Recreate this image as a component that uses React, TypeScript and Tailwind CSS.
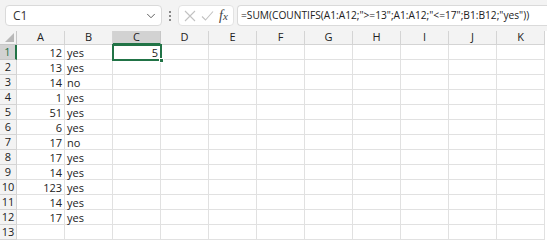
import { ChevronDown } from 'lucide-react';

const cols = ['A', 'B', 'C', 'D', 'E', 'F', 'G', 'H', 'I', 'J', 'K'];

const data: [number, string][] = [
    [12, 'yes'], [13, 'yes'], [14, 'no'], [1, 'yes'], [51, 'yes'], [6, 'yes'],
    [17, 'no'], [17, 'yes'], [14, 'yes'], [123, 'yes'], [14, 'yes'], [17, 'yes'],
];

const formula = '=SUM(COUNTIFS(A1:A12;">=13";A1:A12;"<=17";B1:B12;"yes"))';

export default function App() {
    const rows = Array.from({ length: 13 }, (_, i) => i + 1);

    return (
        <div className="w-[547px] h-[242px] overflow-hidden bg-white font-['Open_Sans',sans-serif] text-[11px] text-[#222]">
            {/* formula bar */}
            <div className="h-[31px] bg-[#f3f3f3] flex items-start pt-[5px] pl-[5px]">
                <div className="shrink-0 w-[157px] h-[21px] bg-white border border-[#dadada] rounded-[4px] flex items-center justify-between pl-[7px] pr-[3px]">
                    <span className="text-[12px] text-[#333]">C1</span>
                    <ChevronDown size={14} strokeWidth={1.6} className="text-[#555]" />
                </div>
                <div className="shrink-0 w-[16px] h-[21px] flex flex-col items-center justify-center gap-[2px]">
                    <span className="w-[2px] h-[2px] bg-[#888]" />
                    <span className="w-[2px] h-[2px] bg-[#888]" />
                    <span className="w-[2px] h-[2px] bg-[#888]" />
                </div>
                <div className="shrink-0 w-[56px] h-[21px] bg-white border border-[#e3e3e3] rounded-[4px] flex items-center gap-[5px] pl-[5px]">
                    <svg width="12" height="12" viewBox="0 0 12 12" fill="none" stroke="#c2c2c2" strokeWidth="1.1">
                        <path d="M1 1 L11 11 M11 1 L1 11" />
                    </svg>
                    <svg width="13" height="12" viewBox="0 0 13 12" fill="none" stroke="#c2c2c2" strokeWidth="1.1">
                        <path d="M1 6.5 L4.5 10 L12 1.5" />
                    </svg>
                    <span className="font-['Liberation_Serif',serif] italic text-[14px] text-[#444] leading-none">f<span className="text-[11px]">x</span></span>
                </div>
                <div className="ml-[3px] flex-1 min-w-0 overflow-hidden h-[21px] bg-white border border-[#dadada] border-r-0 rounded-l-[4px] flex items-center pl-[3px]">
                    <span className="text-[10.2px] text-[#222] whitespace-nowrap">{formula}</span>
                </div>
            </div>

            {/* sheet */}
            <div className="relative">
                <div className="grid grid-cols-[17px_repeat(11,48px)] auto-rows-[15px] grid-rows-[14px]">
                    {/* corner */}
                    <div className="relative bg-[#f3f3f3] border-r border-b border-[#c6c6c6]">
                        <div className="absolute right-[2px] bottom-[2px] w-0 h-0 border-l-[9px] border-l-transparent border-b-[9px] border-b-[#b8b8b8]" />
                    </div>
                    {cols.map((c) => (
                        <div
                            key={c}
                            className={
                                c === 'C'
                                    ? 'bg-[#d2d2d2] border-r border-[#c6c6c6] border-b-2 border-b-[#217346] flex items-center justify-center text-[#222]'
                                    : 'bg-[#f3f3f3] border-r border-b border-[#d4d4d4] flex items-center justify-center text-[#222]'
                            }
                        >
                            {c}
                        </div>
                    ))}

                    {rows.map((r) => {
                        const d = data[r - 1];
                        return [
                            <div
                                key={`h${r}`}
                                className={
                                    r === 1
                                        ? 'bg-[#d2d2d2] border-b border-[#c6c6c6] border-r-2 border-r-[#217346] flex items-center justify-center text-[#217346]'
                                        : 'bg-[#f3f3f3] border-r border-b border-[#d4d4d4] flex items-center justify-center'
                                }
                            >
                                {r}
                            </div>,
                            ...cols.map((c) => (
                                <div
                                    key={`${c}${r}`}
                                    className={`border-r border-b border-[#e1e1e1] flex items-center px-[2px] leading-none whitespace-nowrap ${c === 'A' || c === 'C' ? 'justify-end' : 'justify-start'}`}
                                >
                                    {d && c === 'A' ? d[0] : ''}
                                    {d && c === 'B' ? d[1] : ''}
                                    {r === 1 && c === 'C' ? 5 : ''}
                                </div>
                            )),
                        ];
                    })}
                </div>

                {/* active cell C1 */}
                <div className="absolute left-[112px] top-[13px] w-[50px] h-[17px] border-2 border-[#217346] pointer-events-none">
                    <div className="absolute right-[-4px] bottom-[-4px] w-[5px] h-[5px] bg-[#217346] border border-white" />
                </div>
            </div>
        </div>
    );
}
